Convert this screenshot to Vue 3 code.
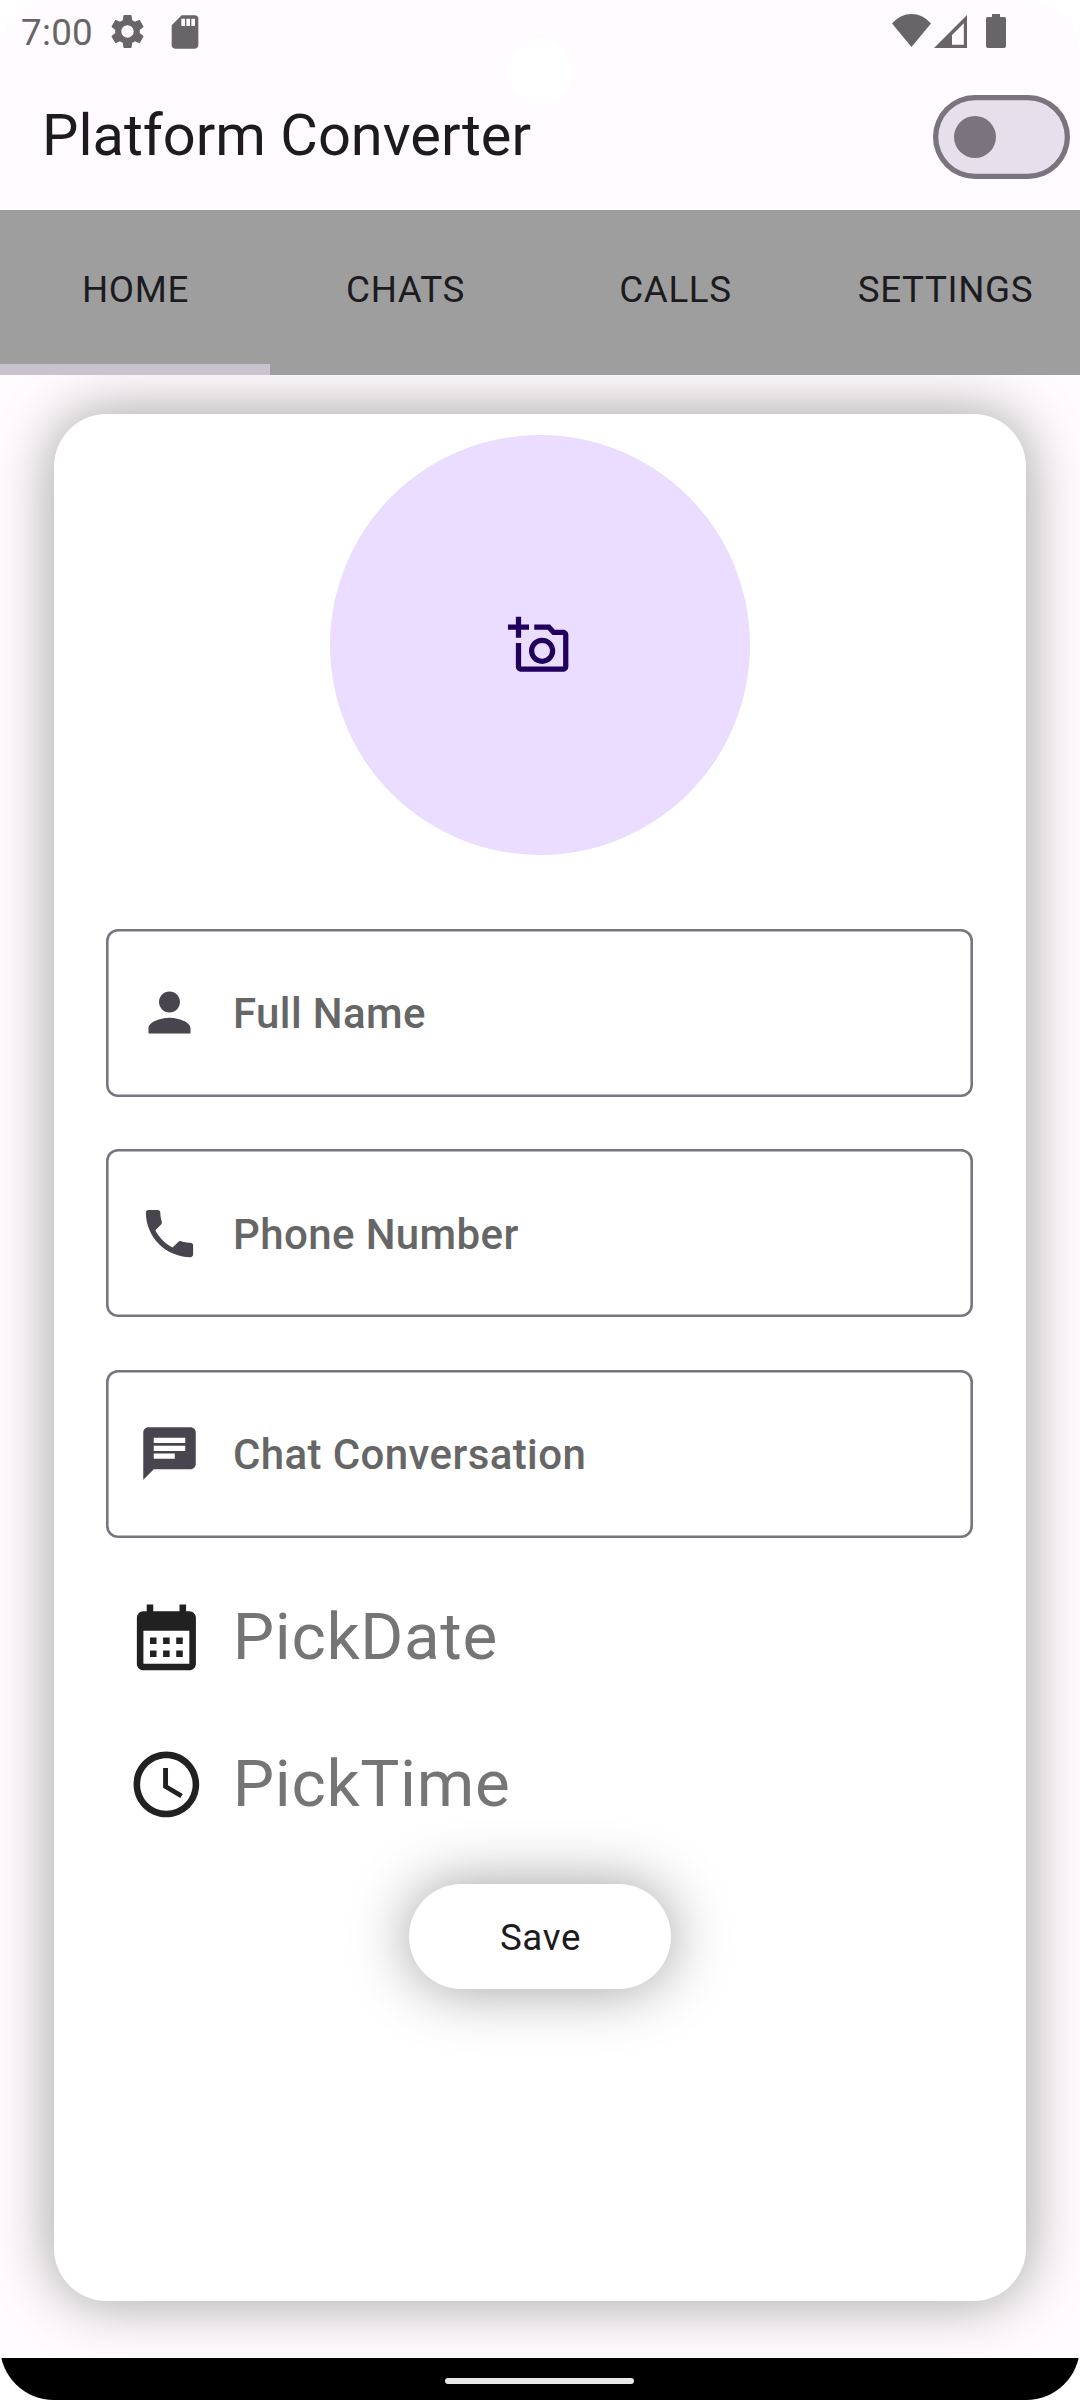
<script setup>
const tabs = ['HOME', 'CHATS', 'CALLS', 'SETTINGS']
const activeTab = 'HOME'

const fields = [
  {
    label: 'Full Name',
    icon: 'M12 12c2.21 0 4-1.79 4-4s-1.79-4-4-4-4 1.79-4 4 1.79 4 4 4zm0 2c-2.67 0-8 1.34-8 4v2h16v-2c0-2.66-5.33-4-8-4z',
  },
  {
    label: 'Phone Number',
    icon: 'M20 15.5c-1.25 0-2.45-.2-3.57-.57-.35-.11-.74-.03-1.02.24l-2.2 2.2c-2.83-1.44-5.15-3.75-6.59-6.59l2.2-2.21c.28-.26.36-.65.25-1C8.7 6.45 8.5 5.25 8.5 4c0-.55-.45-1-1-1H4c-.55 0-1 .45-1 1 0 9.39 7.61 17 17 17 .55 0 1-.45 1-1v-3.5c0-.55-.45-1-1-1z',
  },
  {
    label: 'Chat Conversation',
    icon: 'M20 2H4c-1.1 0-1.99.9-1.99 2L2 22l4-4h14c1.1 0 2-.9 2-2V4c0-1.1-.9-2-2-2zM6 9h12v2H6V9zm8 5H6v-2h8v2zm4-6H6V6h12v2z',
  },
]

const pickers = [
  {
    label: 'PickDate',
    icon: 'M19 4h-1V2h-2v2H8V2H6v2H5c-1.11 0-1.99.9-1.99 2L3 20c0 1.1.89 2 2 2h14c1.1 0 2-.9 2-2V6c0-1.1-.9-2-2-2zm0 16H5V10h14v10zM9 14H7v-2h2v2zm4 0h-2v-2h2v2zm4 0h-2v-2h2v2zm-8 4H7v-2h2v2zm4 0h-2v-2h2v2zm4 0h-2v-2h2v2z',
  },
  {
    label: 'PickTime',
    icon: 'M11.99 2C6.47 2 2 6.48 2 12s4.47 10 9.99 10C17.52 22 22 17.52 22 12S17.52 2 11.99 2zM12 20c-4.42 0-8-3.58-8-8s3.58-8 8-8 8 3.58 8 8-3.58 8-8 8zm.5-13H11v6l5.25 3.15.75-1.23-4.5-2.67z',
  },
]
</script>

<template>
  <div class="screen">
    <span class="camera"></span>
    <header class="status">
      <div class="status-left">
        <span class="time">7:00</span>
        <svg class="gear" viewBox="0 0 24 24"><path d="M19.14 12.94c.04-.3.06-.61.06-.94 0-.32-.02-.64-.07-.94l2.03-1.58c.18-.14.23-.41.12-.61l-1.92-3.32c-.12-.22-.37-.29-.59-.22l-2.39.96c-.5-.38-1.03-.7-1.62-.94L14.4 2.81c-.04-.24-.24-.41-.48-.41h-3.84c-.24 0-.43.17-.47.41l-.36 2.54c-.59.24-1.13.57-1.62.94l-2.39-.96c-.22-.08-.47 0-.59.22L2.74 8.87c-.12.21-.08.47.12.61l2.03 1.58c-.05.3-.09.63-.09.94s.02.64.07.94l-2.03 1.58c-.18.14-.23.41-.12.61l1.92 3.32c.12.22.37.29.59.22l2.39-.96c.5.38 1.03.7 1.62.94l.36 2.54c.05.24.24.41.48.41h3.84c.24 0 .44-.17.47-.41l.36-2.54c.59-.24 1.13-.56 1.62-.94l2.39.96c.22.08.47 0 .59-.22l1.92-3.32c.12-.22.07-.47-.12-.61l-2.01-1.58zM12 15.6c-1.98 0-3.6-1.62-3.6-3.6s1.62-3.6 3.6-3.6 3.6 1.62 3.6 3.6-1.62 3.6-3.6 3.6z" /></svg>
        <svg class="sd" viewBox="0 0 24 24"><path d="M18 2h-8L4.02 8 4 20c0 1.1.9 2 2 2h12c1.1 0 2-.9 2-2V4c0-1.1-.9-2-2-2zm-6 6.4H9.8V4H12v4.4zm3 0h-2.2V4H15v4.4zm3 0h-2.2V4H18v4.4z" /></svg>
      </div>
      <div class="status-right">
        <svg width="39" height="33" viewBox="0 0 39 33"><path d="M0 9.5Q8 0 19.5 0T39 9.5L19.5 33z" /></svg>
        <svg class="signal" width="33" height="33" viewBox="0 0 33 33"><path fill-rule="evenodd" d="M33 0V33H0zM29.8 8.300L18 20V29.800H29.800z" /></svg>
        <svg class="battery" width="20" height="34" viewBox="0 0 20 34"><path d="M6 0h8v3h4q2 0 2 2v27q0 2-2 2H2q-2 0-2-2V5q0-2 2-2h4z" /></svg>
      </div>
    </header>

    <div class="appbar">
      <h1>Platform Converter</h1>
      <div class="switch"><span class="thumb"></span></div>
    </div>

    <nav class="tabs">
      <div v-for="tab in tabs" :key="tab" class="tab" :class="{ active: tab === activeTab }">{{ tab }}</div>
    </nav>

    <main>
      <section class="card">
        <div class="avatar">
          <svg viewBox="0 0 24 24"><path d="M21 6h-3.17L16 4h-6v2h5.12l1.83 2H21v12H5v-9H3v9c0 1.1.9 2 2 2h16c1.1 0 2-.9 2-2V8c0-1.1-.9-2-2-2zM8 14c0 2.76 2.24 5 5 5s5-2.24 5-5-2.24-5-5-5-5 2.24-5 5zm5-3c1.65 0 3 1.35 3 3s-1.35 3-3 3-3-1.35-3-3 1.35-3 3-3zM5 6h3V4H5V1H3v3H0v2h3v3h2z" /></svg>
        </div>
        <div class="fields">
          <div v-for="field in fields" :key="field.label" class="field">
            <svg viewBox="0 0 24 24"><path :d="field.icon" /></svg>
            <span>{{ field.label }}</span>
          </div>
        </div>
        <div v-for="picker in pickers" :key="picker.label" class="picker">
          <svg viewBox="0 0 24 24"><path :d="picker.icon" /></svg>
          <span>{{ picker.label }}</span>
        </div>
        <button class="save">Save</button>
      </section>
    </main>

    <footer class="nav"><span class="handle"></span></footer>
  </div>
</template>

<style>
body {
  margin: 0;
  background: #fff;
}
</style>

<style scoped>
.screen {
  position: relative;
  display: flex;
  flex-direction: column;
  width: 1080px;
  height: 2400px;
  overflow: hidden;
  border-radius: 54px;
  background: #fffbfe;
  color: #1c1b1f;
  font-family: Roboto, sans-serif;
}
svg {
  display: block;
  flex: none;
  fill: currentColor;
}
.camera {
  position: absolute;
  left: 507px;
  top: 38px;
  width: 66px;
  height: 66px;
  border-radius: 50%;
  background: #fff;
}
.status {
  display: flex;
  justify-content: space-between;
  height: 63px;
  color: #686568;
}
.status-left {
  display: flex;
  align-items: center;
  padding-left: 21px;
}
.time {
  width: 86px;
  margin-top: 3px;
  font-size: 36.75px;
  line-height: 44px;
  letter-spacing: 0.3px;
}
.gear {
  width: 41px;
  height: 41px;
}
.sd {
  width: 40px;
  height: 40px;
  margin-left: 17px;
}
.status-right {
  display: flex;
  align-items: flex-start;
  padding: 14px 74px 0 0;
}
.signal {
  margin: 1px 19px 0 3px;
}
.appbar {
  display: flex;
  align-items: center;
  justify-content: space-between;
  height: 147px;
  padding: 0 10.5px 0 42px;
}
h1 {
  margin: 0 0 4px;
  font-size: 57.75px;
  font-weight: 400;
  line-height: 74px;
}
.switch {
  display: flex;
  align-items: center;
  box-sizing: border-box;
  width: 136.5px;
  height: 84px;
  padding-left: 21px;
  border-radius: 42px;
  background: #e7e0ec;
  box-shadow: inset 0 0 0 5.25px #79747e;
}
.thumb {
  width: 42px;
  height: 42px;
  border-radius: 50%;
  background: #79747e;
}
.tabs {
  display: flex;
  height: 165px;
  background: #9e9e9e;
}
.tab {
  flex: 1;
  box-sizing: border-box;
  height: 165px;
  padding: 53px 0 0 1px;
  text-align: center;
  font-size: 36.75px;
  line-height: 53px;
  letter-spacing: 0.656px;
}
.tab.active {
  border-bottom: 11px solid #c9c2cf;
}
main {
  flex: 1;
  overflow: hidden;
  padding: 39.4px 54px 57.5px;
}
.card {
  display: flex;
  flex-direction: column;
  box-sizing: border-box;
  height: 100%;
  padding: 21px 53px 0 52px;
  border-radius: 52.5px;
  background: #fff;
  box-shadow: 0 0 60px #9e9e9e;
}
.avatar {
  display: flex;
  align-items: center;
  justify-content: center;
  align-self: center;
  width: 420px;
  height: 420px;
  margin-left: 1px;
  border-radius: 50%;
  background: #eaddff;
  color: #21005d;
}
.avatar svg {
  width: 63px;
  height: 63px;
  margin-right: 1px;
}
.fields {
  display: flex;
  flex-direction: column;
  gap: 52.5px;
  margin: 73.5px 0 26px;
}
.field {
  display: flex;
  align-items: center;
  gap: 32.5px;
  height: 168px;
  padding-left: 31.5px;
  border-radius: 12px;
  box-shadow: inset 0 0 0 2.6px #79747e;
  color: #49454f;
}
.field svg {
  width: 63px;
  height: 63px;
}
.field span {
  padding-top: 2px;
  color: #666;
  font-size: 42px;
  font-weight: 500;
  line-height: 63px;
  letter-spacing: 0.394px;
}
.picker {
  display: flex;
  align-items: center;
  gap: 27px;
  height: 147px;
  padding-left: 21px;
  color: #212121;
}
.picker svg {
  width: 78.75px;
  height: 78.75px;
}
.picker span {
  color: #757575;
  font-size: 65.625px;
  line-height: 80px;
  letter-spacing: 0.656px;
}
.save {
  align-self: center;
  box-sizing: border-box;
  width: 262.5px;
  height: 105px;
  margin: 26px 0 0 1px;
  padding: 2px 0 0 1px;
  border: 0;
  border-radius: 52.5px;
  background: #fff;
  box-shadow: 0 0 60px #9e9e9e;
  color: #1c1b1f;
  font-family: inherit;
  font-size: 36.75px;
  letter-spacing: 0.656px;
}
.nav {
  display: flex;
  justify-content: center;
  height: 42px;
  background: #000;
}
.handle {
  width: 189px;
  height: 6px;
  margin: 20px 1px 0 0;
  border-radius: 3px;
  background: #e8e8e8;
}
</style>
